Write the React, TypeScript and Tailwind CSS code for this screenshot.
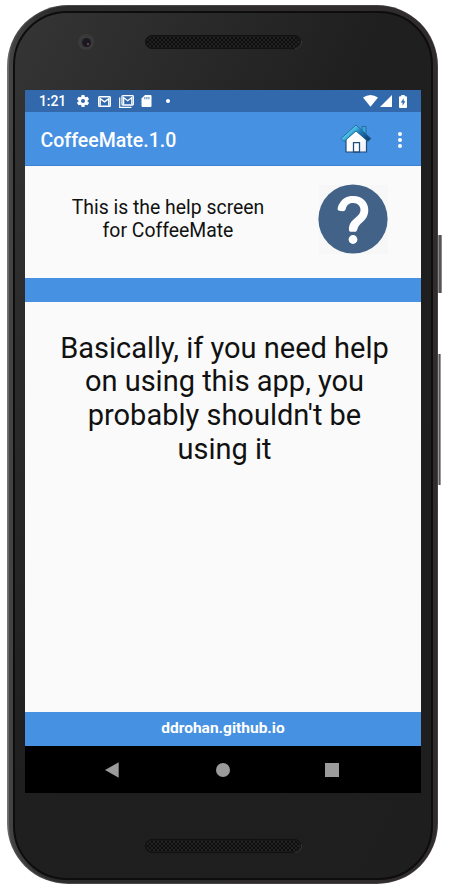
import React from "react";

function Speaker({ id }: { id: string }) {
  return (
    <svg className="block" width="157" height="14" viewBox="0 0 157 14">
      <defs>
        <pattern id={id} width="4" height="4" patternUnits="userSpaceOnUse">
          <rect width="4" height="4" fill="#222223" />
          <circle cx="1" cy="1" r="1" fill="#050505" />
          <circle cx="3" cy="3" r="1" fill="#050505" />
        </pattern>
      </defs>
      <rect x="0.5" y="0.5" width="155.5" height="13" rx="6.5" fill="#191919" stroke="#111" />
      <path d="M150 13.5a6.5 6.5 0 0 0 6.3-8" fill="none" stroke="#484848" strokeWidth=".7" />
      <rect x="2" y="2" width="152" height="10" rx="5" fill={`url(#${id})`} />
    </svg>
  );
}

function StatusBar() {
  return (
    <div className="flex h-[22px] shrink-0 items-center bg-[#3269ad] pl-[14px] pr-[14px] pt-px text-white">
      <span className="-mt-px w-[37px] text-[14px] font-medium leading-none tracking-[-0.1px]">1:21</span>
      <svg className="-mt-px" width="14" height="14" viewBox="1 1 22 22" fill="#fff">
        <path d="M19.14 12.94c.04-.3.06-.61.06-.94s-.02-.64-.07-.94l2.03-1.58a.5.5 0 0 0 .12-.61l-1.92-3.32a.5.5 0 0 0-.59-.22l-2.39.96a7 7 0 0 0-1.62-.94l-.36-2.54a.5.5 0 0 0-.48-.41h-3.84a.5.5 0 0 0-.47.41l-.36 2.54a7 7 0 0 0-1.62.94l-2.39-.96a.5.5 0 0 0-.59.22L2.74 8.87a.5.5 0 0 0 .12.61l2.03 1.58a6 6 0 0 0 0 1.88l-2.03 1.58a.5.5 0 0 0-.12.61l1.92 3.32c.12.22.37.29.59.22l2.39-.96c.5.38 1.03.7 1.62.94l.36 2.54c.05.24.24.41.48.41h3.84c.24 0 .44-.17.47-.41l.36-2.54a7 7 0 0 0 1.62-.94l2.39.96c.22.08.47 0 .59-.22l1.92-3.32a.5.5 0 0 0-.12-.61zM12 15.2a3.2 3.2 0 1 1 0-6.4 3.2 3.2 0 0 1 0 6.4z" />
      </svg>
      <svg className="-mt-px ml-[8px]" width="13" height="11" viewBox="0 0 13 11">
        <rect x=".7" y=".7" width="11.600" height="9.600" rx=".8" fill="none" stroke="#fff" strokeWidth="1.4" />
        <path d="M2.200 9.500V2.600l4.300 3.200 4.300-3.200v6.900" fill="none" stroke="#fff" strokeWidth="1.400" />
      </svg>
      <svg className="-mt-px ml-[8px]" width="15" height="13" viewBox="0 0 15 13">
        <path d="M.7 2.500v9.800h11.800" fill="none" stroke="#fff" strokeWidth="1.200" />
        <rect x="3" y=".7" width="11.300" height="9.300" rx=".8" fill="none" stroke="#fff" strokeWidth="1.300" />
        <path d="M4.600 9.500V2.600l4.100 3.200 4.100-3.200v6.900" fill="none" stroke="#fff" strokeWidth="1.300" />
      </svg>
      <svg className="-mt-px ml-[7px]" width="11" height="12" viewBox="0 0 11 12">
        <path d="M4 0h5.500a1 1 0 0 1 1 1v10a1 1 0 0 1-1 1h-8a1 1 0 0 1-1-1V3.500z" fill="#fff" />
        <path d="M3.900 2v2.300M5.900 2v2.300M7.900 2v2.300" stroke="#3269ad" strokeWidth=".9" />
      </svg>
      <span className="-mt-px ml-[14px] size-[4px] rounded-full bg-white" />
      <span className="grow" />
      <svg className="-mt-px" width="15" height="12" viewBox="0 0 15 12">
        <path d="M0 2.600Q7.500-2.600 15 2.600L7.500 11.800z" fill="#fff" />
      </svg>
      <svg className="-mt-px ml-[2px]" width="12" height="12" viewBox="0 0 12 12">
        <path d="M12 0v12H0z" fill="#fff" />
      </svg>
      <svg className="-mt-px ml-[7px]" width="8" height="13" viewBox="0 0 8 13">
        <path d="M2.300 0h3.400v1.300h1.300a1 1 0 0 1 1 1V12a1 1 0 0 1-1 1H1a1 1 0 0 1-1-1V2.300a1 1 0 0 1 1-1h1.300z" fill="#fff" />
        <path d="M4.700 3.200L1.800 7.600h1.800v3.200l2.700-4.500H4.700z" fill="#3269ad" />
      </svg>
    </div>
  );
}

function HomeIcon() {
  return (
    <svg width="32" height="30" viewBox="0 0 32 30">
      <defs>
        <linearGradient id="roof" x1="0" y1="0" x2="1" y2="0.600">
          <stop offset="0" stopColor="#2488b5" />
          <stop offset=".38" stopColor="#50c7ec" />
          <stop offset=".65" stopColor="#1c7dbb" />
          <stop offset="1" stopColor="#12467f" />
        </linearGradient>
        <linearGradient id="wall" x1="0" y1="0" x2="1" y2="1">
          <stop offset=".5" stopColor="#fff" />
          <stop offset="1" stopColor="#e8eef5" />
        </linearGradient>
      </defs>
      <path d="M22 2.500h4v10h-4z" fill="#39a6d8" stroke="#24608c" strokeWidth=".8" />
      <path d="M6 15L16 6l10.500 9v13H6z" fill="url(#wall)" stroke="#214b7c" strokeWidth="1.200" />
      <path d="M16 1L1 14.500l3 3L16 7l12 10.500 3-3z" fill="url(#roof)" stroke="#1d638f" strokeWidth=".8" strokeLinejoin="round" />
      <path d="M13.500 28v-9.300h6V28z" fill="#fff" stroke="#234e7d" strokeWidth="1.300" />
    </svg>
  );
}

function AppBar() {
  return (
    <header className="flex h-[54px] shrink-0 items-center border-b border-[#3c83d5] bg-[#4791e3] pl-[15.500px] pr-[19.500px] text-white">
      <h1 className="grow pt-[4px] text-[19.5px] font-medium leading-none">CoffeeMate.1.0</h1>
      <div className="pt-px"><HomeIcon /></div>
      <div className="ml-[26px] flex flex-col gap-[2px] pt-[2px]">
        <i className="size-[4px] rounded-full bg-white" />
        <i className="size-[4px] rounded-full bg-white" />
        <i className="size-[4px] rounded-full bg-white" />
      </div>
    </header>
  );
}

function HelpIcon() {
  return (
    <svg className="block" width="70" height="70" viewBox="0 0 70 70">
      <rect x="1" y="1" width="69" height="69" fill="#f7f7f7" />
      <circle cx="35" cy="35" r="34.600" fill="#436288" />
      <path d="M21 26.700C18.500 26.200 20 22 21.500 19.500C25 13.500 30 12 35.500 12C44 12 50.300 18 50.300 26C50.300 34.500 45 37 41.500 41C39 43.800 39.500 47.700 37.500 47.700H32.500C30 47.700 30.800 42 32.500 39C35.500 34 42.500 31.500 42.500 26C42.500 22 39.500 19 35.500 19C31 19 29 21 28 24C27.200 27.500 26 27.500 21 26.700z" fill="#fff" />
      <circle cx="35" cy="55.500" r="4.400" fill="#fff" />
    </svg>
  );
}

function Screen() {
  return (
    <main className="flex h-[703px] w-[396px] flex-col bg-[#fafafa]">
      <StatusBar />
      <AppBar />
      <section className="flex h-[112px] shrink-0 justify-between pl-[43px] pr-[33px]">
        <p className="w-[200px] pt-[31px] text-center text-[19.400px] leading-[22.500px] text-[#111]">
          This is the help screen<br />for CoffeeMate
        </p>
        <div className="pt-[18px]"><HelpIcon /></div>
      </section>
      <div className="h-[24px] shrink-0 bg-[#4791e3]" />
      <p className="grow pt-[29.500px] pl-[3px] text-center text-[29px] leading-[33.700px] text-[#111]">
        Basically, if you need help<br />on using this app, you<br />probably shouldn't be<br />using it
      </p>
      <footer className="h-[34px] shrink-0 bg-[#4791e3] text-center text-[15.500px] font-bold leading-[33px] text-white">
        ddrohan.github.io
      </footer>
      <nav className="flex h-[47px] shrink-0 items-center justify-between bg-black pl-[80px] pr-[82px]">
        <svg width="14" height="16" viewBox="0 0 14 16"><path d="M0 8L13.700.3v15.400z" fill="#9b9b9b" /></svg>
        <span className="ml-px size-[14px] rounded-full bg-[#9b9b9b]" />
        <span className="size-[14px] bg-[#9b9b9b]" />
      </nav>
    </main>
  );
}

export default function App() {
  return (
    <div className="h-[893px] w-[450px] bg-white pl-[7px] pt-[5px] font-['Roboto',sans-serif]">
      <div className="relative h-[879px] w-[431px] rounded-[61px] bg-linear-to-r from-[#777] via-[#4b4b4b] via-[1%] to-[#454042] pt-px pr-px pb-px pl-[2px]">
        <div className="h-full rounded-[59px] bg-linear-to-r from-[#444] via-[#2c2c2c] via-10% to-[#302c2d] px-[4px] pt-[5px] pb-[3px]">
          <div className="h-full rounded-[54px] border-2 border-[#0d0d0d] bg-linear-to-br from-[#353536] via-[#1f1f20] via-45% to-[#1e1e1f] pl-[10px]">
            <div className="flex h-[77px] items-start pt-[22px]">
              <div className="ml-[53px] -mt-px flex size-[16px] items-center justify-center rounded-full bg-[#3a3a3b]">
                <span className="flex size-[9px] items-center justify-center rounded-full bg-[#1c1821]">
                  <i className="ml-[3px] mt-[3px] size-[2px] rounded-full bg-[#775052]" />
                </span>
              </div>
              <div className="ml-[51px]"><Speaker id="top-mesh" /></div>
            </div>
            <Screen />
            <div className="ml-[120px] mt-[46px]"><Speaker id="bottom-mesh" /></div>
          </div>
        </div>
        <div className="absolute left-[431px] top-[230px] h-[58px] w-[4px] border-x border-[#888] bg-[#555]" />
        <div className="absolute left-[431px] top-[349px] h-[131px] w-[3px] border-x border-[#999] bg-[#555]" />
      </div>
    </div>
  );
}
